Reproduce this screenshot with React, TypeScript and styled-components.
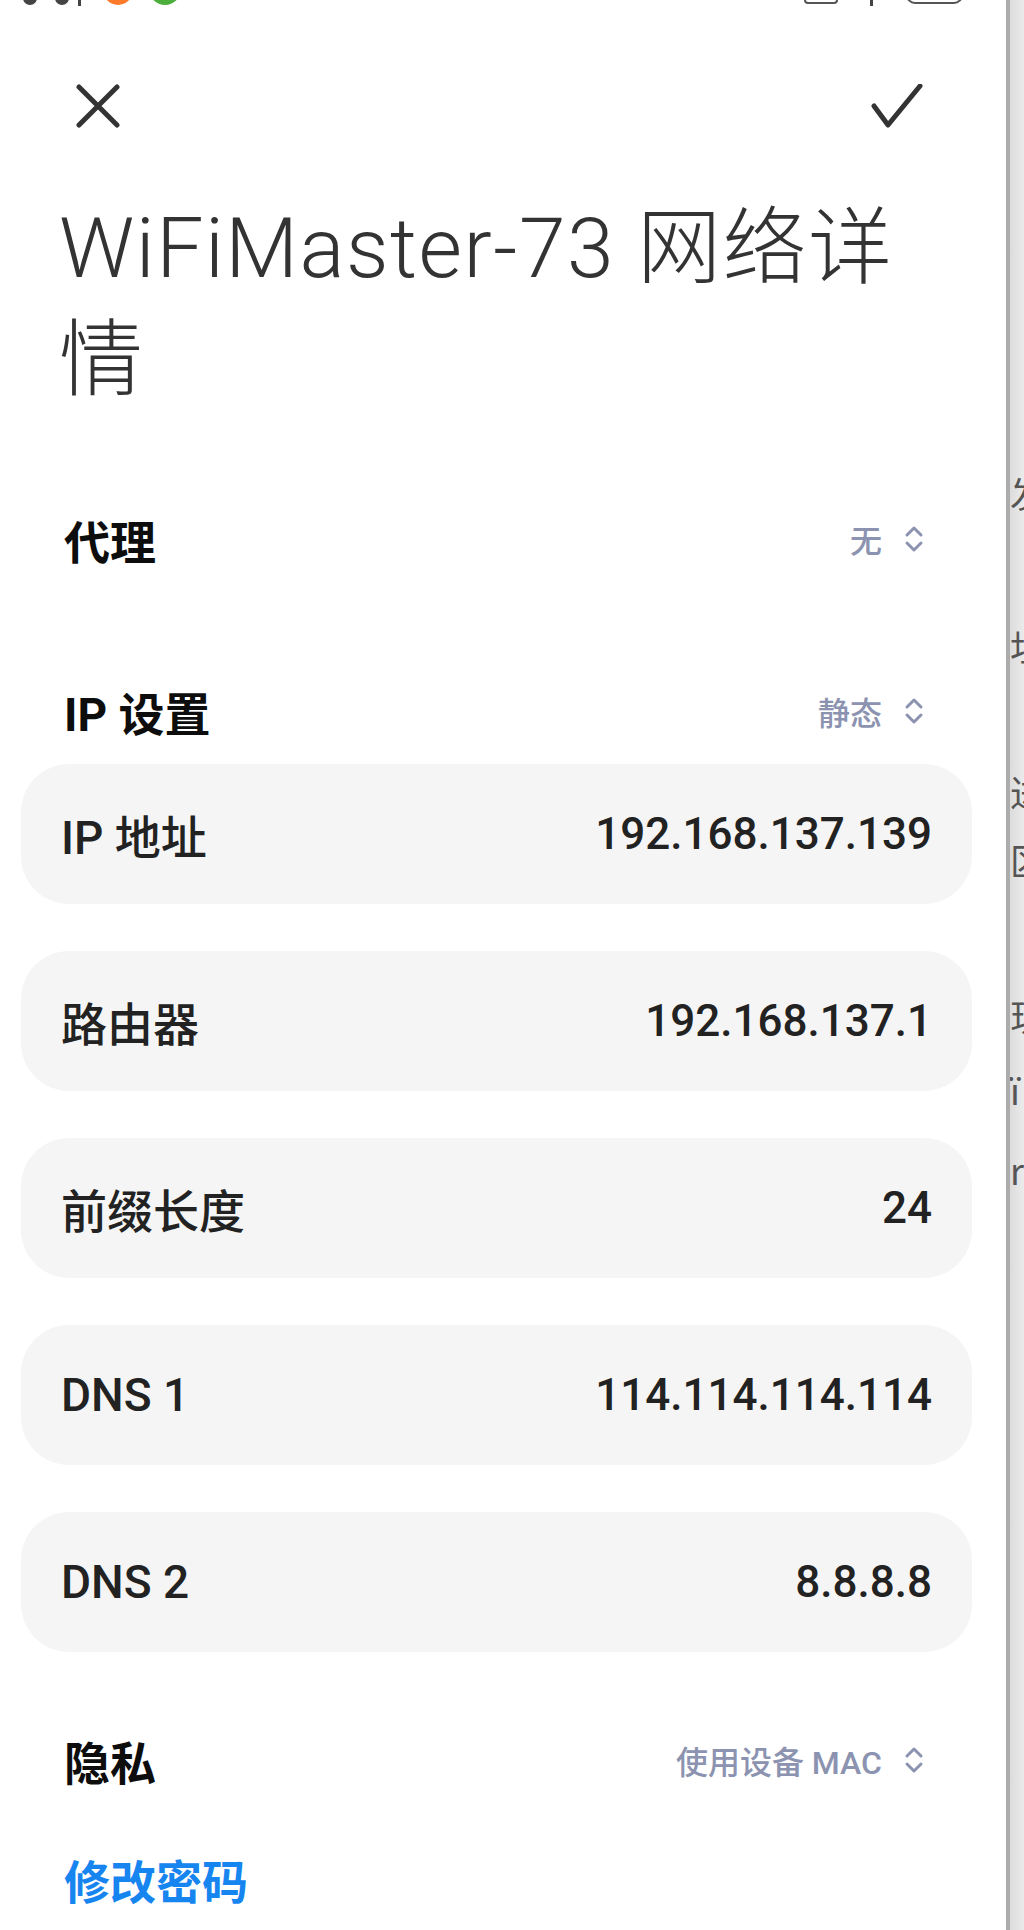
import React, { FC } from 'react'
import styled, { createGlobalStyle } from 'styled-components'

const GlobalStyle = createGlobalStyle`
  html, body {
    margin: 0;
    padding: 0;
    background: #ffffff;
  }
  body {
    font-family: Roboto, 'Noto Sans CJK SC', sans-serif;
  }
`

const Screen = styled.div`
  display: flex;
  width: 1024px;
  height: 1930px;
  overflow: hidden;
`
const Sheet = styled.div`
  width: 1006px;
  flex-shrink: 0;
  display: flex;
  flex-direction: column;
  background: #ffffff;
`
const SheetEdge = styled.div`
  width: 4px;
  flex-shrink: 0;
  background: #acacac;
`
const BehindPage = styled.div`
  flex: 1;
  display: flex;
  flex-direction: column;
  overflow: hidden;
  background: linear-gradient(90deg, #dcdcdc, #ebebeb);
`
const BehindLine = styled.div<{ $gap: number }>`
  margin-top: ${(p) => p.$gap}px;
  font-family: 'Noto Sans CJK SC', sans-serif;
  font-size: 36px;
  line-height: 36px;
  color: #555555;
  white-space: nowrap;
`

const StatusBar = styled.div`
  height: 6px;
  flex-shrink: 0;
  display: flex;
  align-items: flex-end;
  overflow: hidden;
  padding: 0 43px 0 23px;
`
const StatusGroup = styled.div`
  display: flex;
  align-items: flex-end;
`
const StatusSpacer = styled.div`
  flex: 1;
`
const StatusDot = styled.div<{ $size: number; $color: string; $ml: number }>`
  width: ${(p) => p.$size}px;
  height: ${(p) => p.$size}px;
  margin-left: ${(p) => p.$ml}px;
  margin-bottom: 1px;
  border-radius: 50%;
  background: ${(p) => p.$color};
  flex-shrink: 0;
`
const StatusBarLine = styled.div<{ $ml: number }>`
  width: 3px;
  height: 20px;
  margin-left: ${(p) => p.$ml}px;
  background: #444444;
  flex-shrink: 0;
`
const StatusOutline = styled.div<{ $w: number; $r: number; $ml: number }>`
  width: ${(p) => p.$w}px;
  height: 24px;
  margin-left: ${(p) => p.$ml}px;
  margin-bottom: 2px;
  box-sizing: border-box;
  border: 2.5px solid #555555;
  border-radius: ${(p) => p.$r}px;
  flex-shrink: 0;
`

const NavBar = styled.div`
  height: 187px;
  flex-shrink: 0;
  box-sizing: border-box;
  display: flex;
  justify-content: space-between;
  align-items: flex-start;
  padding: 78px 83px 0 76px;
`
const NavButton = styled.button`
  border: none;
  background: none;
  padding: 0;
  display: flex;
  cursor: pointer;
`

const Title = styled.h1`
  margin: 0;
  box-sizing: border-box;
  width: 925px;
  padding-left: 59px;
  font-family: Roboto, 'Noto Sans CJK SC', sans-serif;
  font-weight: 300;
  font-size: 84px;
  line-height: 112px;
  letter-spacing: 1.5px;
  color: #333333;
`

const SettingRow = styled.div<{ $mt: number; $h: number }>`
  height: ${(p) => p.$h}px;
  margin-top: ${(p) => p.$mt}px;
  flex-shrink: 0;
  display: flex;
  align-items: center;
  justify-content: space-between;
  padding: 0 82px 0 64px;
`
const RowLabel = styled.span<{ $accent?: boolean }>`
  font-family: Roboto, 'Noto Sans CJK SC', sans-serif;
  font-size: 46px;
  font-weight: 700;
  color: ${(p) => (p.$accent ? '#1685f0' : '#0d0d0d')};
`
const RowValue = styled.span`
  display: flex;
  align-items: center;
  gap: 22px;
  font-family: Roboto, 'Noto Sans CJK SC', sans-serif;
  font-size: 32px;
  font-weight: 500;
  color: #8c93b0;
`

const CardList = styled.div`
  display: flex;
  flex-direction: column;
  gap: 47px;
  margin: 8px 34px 0 21px;
`
const InfoCard = styled.div`
  height: 140px;
  border-radius: 48px;
  background: #f5f5f5;
  display: flex;
  align-items: center;
  justify-content: space-between;
  padding: 0 40px;
  font-family: Roboto, 'Noto Sans CJK SC', sans-serif;
  font-weight: 500;
  color: #222222;
`
const CardLabel = styled.span`
  font-size: 46px;
`
const CardValue = styled.span`
  font-size: 44px;
`

const CloseIcon: FC = () => (
  <svg width="44" height="44" viewBox="0 0 44 44" fill="none">
    <path d="M3 3 L41 41 M41 3 L3 41" stroke="#333" strokeWidth="5" strokeLinecap="round" />
  </svg>
)

const CheckIcon: FC = () => (
  <svg width="52" height="44" viewBox="0 0 52 44" fill="none">
    <path d="M3 22 L17 41 L49 2" stroke="#333" strokeWidth="5" strokeLinecap="round" strokeLinejoin="round" />
  </svg>
)

const UpDownIcon: FC = () => (
  <svg width="20" height="28" viewBox="0 0 20 28" fill="none">
    <path d="M3 10 L10 3 L17 10 M3 18 L10 25 L17 18" stroke="#8c93b0" strokeWidth="3" strokeLinecap="round" strokeLinejoin="round" />
  </svg>
)

const cards = [
  { label: 'IP 地址', value: '192.168.137.139' },
  { label: '路由器', value: '192.168.137.1' },
  { label: '前缀长度', value: '24' },
  { label: 'DNS 1', value: '114.114.114.114' },
  { label: 'DNS 2', value: '8.8.8.8' },
]

const behindLines = [
  { text: '发现', gap: 474 },
  { text: '址', gap: 118 },
  { text: '进阶', gap: 109 },
  { text: '区', gap: 32 },
  { text: '现', gap: 120 },
  { text: 'ï', gap: 38 },
  { text: 'rc', gap: 44 },
]

const App: FC = () => {
  return (
    <>
      <GlobalStyle />
      <Screen>
        <Sheet>
          <StatusBar>
            <StatusGroup>
              <StatusDot $size={14} $color="#444" $ml={0} />
              <StatusDot $size={14} $color="#444" $ml={18} />
              <StatusBarLine $ml={9} />
              <StatusDot $size={30} $color="#ff7a2a" $ml={22} />
              <StatusDot $size={32} $color="#4caf3c" $ml={16} />
            </StatusGroup>
            <StatusSpacer />
            <StatusGroup>
              <StatusOutline $w={34} $r={4} $ml={0} />
              <StatusBarLine $ml={32} />
              <StatusOutline $w={57} $r={9} $ml={33} />
            </StatusGroup>
          </StatusBar>

          <NavBar>
            <NavButton aria-label="关闭">
              <CloseIcon />
            </NavButton>
            <NavButton aria-label="确定">
              <CheckIcon />
            </NavButton>
          </NavBar>

          <Title>WiFiMaster-73 网络详情</Title>

          <SettingRow $mt={62} $h={120}>
            <RowLabel>代理</RowLabel>
            <RowValue>
              无
              <UpDownIcon />
            </RowValue>
          </SettingRow>

          <SettingRow $mt={67} $h={90}>
            <RowLabel>IP 设置</RowLabel>
            <RowValue>
              静态
              <UpDownIcon />
            </RowValue>
          </SettingRow>

          <CardList>
            {cards.map((c) => (
              <InfoCard key={c.label}>
                <CardLabel>{c.label}</CardLabel>
                <CardValue>{c.value}</CardValue>
              </InfoCard>
            ))}
          </CardList>

          <SettingRow $mt={48} $h={120}>
            <RowLabel>隐私</RowLabel>
            <RowValue>
              使用设备 MAC
              <UpDownIcon />
            </RowValue>
          </SettingRow>

          <SettingRow $mt={0} $h={118}>
            <RowLabel $accent>修改密码</RowLabel>
          </SettingRow>
        </Sheet>
        <SheetEdge />
        <BehindPage>
          {behindLines.map((l) => (
            <BehindLine key={l.text} $gap={l.gap}>
              {l.text}
            </BehindLine>
          ))}
        </BehindPage>
      </Screen>
    </>
  )
}

export default App
